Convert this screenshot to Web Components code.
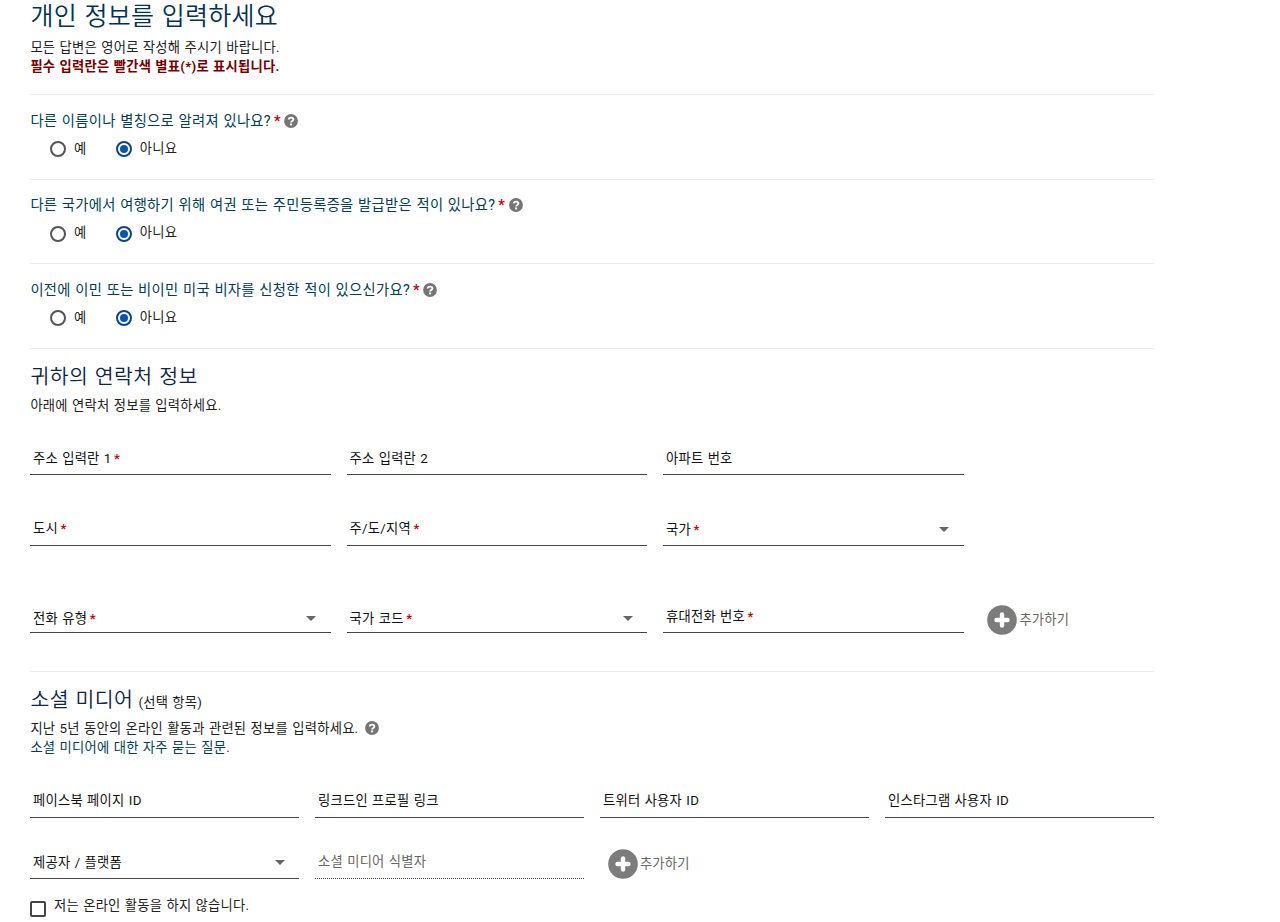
<!DOCTYPE html>
<html lang="ko">
<head>
<meta charset="utf-8">
<title>개인 정보</title>
<style>
  body {
    margin: 0;
    background: #fff;
    color: #212121;
    font: 13.3px/19px Roboto, "Noto Sans CJK KR", sans-serif;
    letter-spacing: 0.25px;
    word-spacing: 0.65px;
    overflow: hidden;
  }
</style>
</head>
<body>
<personal-form></personal-form>

<script>
// help-icon
class HelpIcon extends HTMLElement {
  constructor() {
    super();
    this.attachShadow({ mode: "open" });
    this.shadowRoot.innerHTML = `
      <style>
        :host { display: inline-flex; width: 14px; height: 14px; }
      </style>
      <svg width="14" height="14" viewBox="0 0 14 14">
        <circle cx="7" cy="7" r="6.9" fill="#757575"/>
        <path d="M4.7 5.4C4.7 3 9.4 2.9 9.4 5.5C9.4 7 7.1 7 7.1 8.5" fill="none" stroke="#fff" stroke-width="1.8"/>
        <rect x="6.1" y="9.5" width="2" height="1.9" fill="#fff"/>
      </svg>
    `;
  }
}
customElements.define("help-icon", HelpIcon);

// radio-option
class RadioOption extends HTMLElement {
  constructor() {
    super();
    this.attachShadow({ mode: "open" });
    this.shadowRoot.innerHTML = `
      <style>
        :host { display: flex; align-items: center; gap: 8px; }
        .ring {
          box-sizing: border-box;
          width: 16px;
          height: 16px;
          border: 2px solid #555;
          border-radius: 50%;
          display: flex;
          align-items: center;
          justify-content: center;
        }
        :host([checked]) .ring { border-color: #07458f; }
        :host([checked]) .ring::after {
          content: "";
          width: 8px;
          height: 8px;
          border-radius: 50%;
          background: #0b55a5;
        }
        .text { padding-bottom: 2px; }
      </style>
      <span class="ring"></span><span class="text"><slot></slot></span>
    `;
  }
}
customElements.define("radio-option", RadioOption);

// yes-no-question
class YesNoQuestion extends HTMLElement {
  constructor() {
    super();
    this.attachShadow({ mode: "open" });
    this.shadowRoot.innerHTML = `
      <style>
        :host {
          display: block;
          box-sizing: border-box;
          height: 84.67px;
          border-top: 1px solid #ececec;
          padding-top: 16px;
        }
        .question {
          display: flex;
          align-items: center;
          height: 20px;
          font-size: 14.3px;
          letter-spacing: 0.32px;
          word-spacing: 0.6px;
          color: #003e51;
        }
        .star { color: #c00; font-weight: 700; margin: 0 3.5px 0 3px; }
        help-icon { margin-bottom: 1px; }
        .options { display: flex; gap: 29.4px; padding: 8px 0 0 19.6px; height: 20px; }
      </style>
      <div class="question"><slot></slot><span class="star">*</span><help-icon></help-icon></div>
      <div class="options">
        <radio-option>예</radio-option>
        <radio-option checked>아니요</radio-option>
      </div>
    `;
  }
}
customElements.define("yes-no-question", YesNoQuestion);

// form-field: text input or select, both empty with a resting label
class FormField extends HTMLElement {
  constructor() {
    super();
    this.attachShadow({ mode: "open" });
  }

  connectedCallback() {
    const star = this.hasAttribute("required") ? `<span class="star">*</span>` : "";
    const arrow = this.hasAttribute("select") ? `<span class="arrow"></span>` : "";
    this.shadowRoot.innerHTML = `
      <style>
        :host {
          display: flex;
          box-sizing: border-box;
          align-items: center;
          height: 34px;
          padding: var(--label-drop, 0px) 2.6px 0;
          border-bottom: 1px solid #444;
          color: #111;
        }
        :host([select]) { padding-top: calc(var(--label-drop, 0px) + 3px); }
        :host([disabled]) { border-bottom: 1px dotted #444; color: #666; }
        .star { color: #c00; margin-left: 2.5px; font-weight: 500; }
        .arrow {
          margin-left: auto;
          margin-right: 12px;
          border: 5px solid transparent;
          border-top-color: #666;
          border-bottom: 0;
        }
      </style>
      <slot></slot>${star}${arrow}
    `;
  }
}
customElements.define("form-field", FormField);

// add-button
class AddButton extends HTMLElement {
  constructor() {
    super();
    this.attachShadow({ mode: "open" });
    this.shadowRoot.innerHTML = `
      <style>
        :host { display: flex; align-items: center; gap: 2px; height: 30px; padding-left: 7.5px; color: #666; }
      </style>
      <svg width="30" height="30" viewBox="0 0 30 30">
        <circle cx="15" cy="15" r="14.8" fill="#7c7c7c"/>
        <path d="M15 9.5V20.5M9.5 15H20.5" stroke="#fff" stroke-width="4.4" stroke-linecap="round"/>
      </svg>
      <span><slot></slot></span>
    `;
  }
}
customElements.define("add-button", AddButton);

// check-option
class CheckOption extends HTMLElement {
  constructor() {
    super();
    this.attachShadow({ mode: "open" });
    this.shadowRoot.innerHTML = `
      <style>
        :host { display: flex; align-items: flex-end; gap: 7.6px; height: 22px; }
        .box { box-sizing: border-box; width: 16px; height: 16px; border: 2px solid #444; border-radius: 2px; }
        .text { align-self: flex-start; padding-top: 1.5px; }
      </style>
      <span class="box"></span><span class="text"><slot></slot></span>
    `;
  }
}
customElements.define("check-option", CheckOption);

// form-section
class FormSection extends HTMLElement {
  constructor() {
    super();
    this.attachShadow({ mode: "open" });
    this.shadowRoot.innerHTML = `
      <style>
        :host { display: block; border-top: 1px solid #ececec; padding-top: 13px; }
        h2 {
          margin: 0 0 var(--title-gap, 4px);
          font-size: 20.5px;
          font-weight: 350;
          line-height: 30px;
          letter-spacing: 0.4px;
          word-spacing: 1.2px;
          color: #0b2545;
        }
      </style>
      <h2><slot name="title"></slot></h2>
      <slot></slot>
    `;
  }
}
customElements.define("form-section", FormSection);

// personal-form
class PersonalForm extends HTMLElement {
  constructor() {
    super();
    this.attachShadow({ mode: "open" });
    this.shadowRoot.innerHTML = `
      <style>
        :host { display: block; width: 1124px; margin-left: 30.4px; }
        header { box-sizing: border-box; height: 94px; padding-top: 1px; }
        h1 {
          margin: 0;
          height: 37px;
          font-size: 25px;
          font-weight: 350;
          line-height: 32px;
          letter-spacing: 0.25px;
          word-spacing: 1.2px;
          color: #003352;
        }
        p { margin: 0; }
        .notice { color: #700; font-weight: 700; }
        .row { display: grid; gap: 16px; align-items: start; }
        .contact { grid-template-columns: repeat(3, 300.5px) auto; }
        .social { grid-template-columns: repeat(4, 1fr); }
        .address { margin-top: 26px; --label-drop: 2px; }
        .city { margin-top: 37px; }
        .phone { margin: 53px 0 38px; height: 34px; --label-drop: 2px; }
        .phone form-field[select] { --label-drop: 4px; }
        .phone add-button { margin-top: 6px; }
        .accounts { margin-top: 26px; }
        .other { margin-top: 27px; }
        .other add-button { margin-top: 4px; }
        .optional { font-size: 13.3px; font-weight: 400; letter-spacing: 0.25px; word-spacing: 0.5px; margin-left: -1.5px; color: #212121; }
        .online { --title-gap: 1px; }
        .help { display: flex; align-items: center; gap: 6.5px; }
        .help help-icon { margin-bottom: 1px; }
        .link { color: #003e51; margin-bottom: 27px; }
        .link + .accounts { margin-top: 0; }
        check-option { margin-top: 16px; }
      </style>
      <header>
        <h1>개인 정보를 입력하세요</h1>
        <p>모든 답변은 영어로 작성해 주시기 바랍니다.</p>
        <p class="notice">필수 입력란은 빨간색 별표(*)로 표시됩니다.</p>
      </header>

      <yes-no-question>다른 이름이나 별칭으로 알려져 있나요?</yes-no-question>
      <yes-no-question>다른 국가에서 여행하기 위해 여권 또는 주민등록증을 발급받은 적이 있나요?</yes-no-question>
      <yes-no-question>이전에 이민 또는 비이민 미국 비자를 신청한 적이 있으신가요?</yes-no-question>

      <form-section>
        <span slot="title">귀하의 연락처 정보</span>
        <p>아래에 연락처 정보를 입력하세요.</p>
        <div class="row contact address">
          <form-field required>주소 입력란 1</form-field>
          <form-field>주소 입력란 2</form-field>
          <form-field>아파트 번호</form-field>
        </div>
        <div class="row contact city">
          <form-field required>도시</form-field>
          <form-field required>주/도/지역</form-field>
          <form-field required select>국가</form-field>
        </div>
        <div class="row contact phone">
          <form-field required select>전화 유형</form-field>
          <form-field required select>국가 코드</form-field>
          <form-field required>휴대전화 번호</form-field>
          <add-button>추가하기</add-button>
        </div>
      </form-section>

      <form-section class="online">
        <span slot="title">소셜 미디어 <span class="optional">(선택 항목)</span></span>
        <p class="help">지난 5년 동안의 온라인 활동과 관련된 정보를 입력하세요. <help-icon></help-icon></p>
        <p class="link">소셜 미디어에 대한 자주 묻는 질문.</p>
        <div class="row social accounts">
          <form-field>페이스북 페이지 ID</form-field>
          <form-field>링크드인 프로필 링크</form-field>
          <form-field>트위터 사용자 ID</form-field>
          <form-field>인스타그램 사용자 ID</form-field>
        </div>
        <div class="row social other">
          <form-field select>제공자 / 플랫폼</form-field>
          <form-field disabled>소셜 미디어 식별자</form-field>
          <add-button>추가하기</add-button>
        </div>
        <check-option>저는 온라인 활동을 하지 않습니다.</check-option>
      </form-section>
    `;
  }
}
customElements.define("personal-form", PersonalForm);
</script>
</body>
</html>
